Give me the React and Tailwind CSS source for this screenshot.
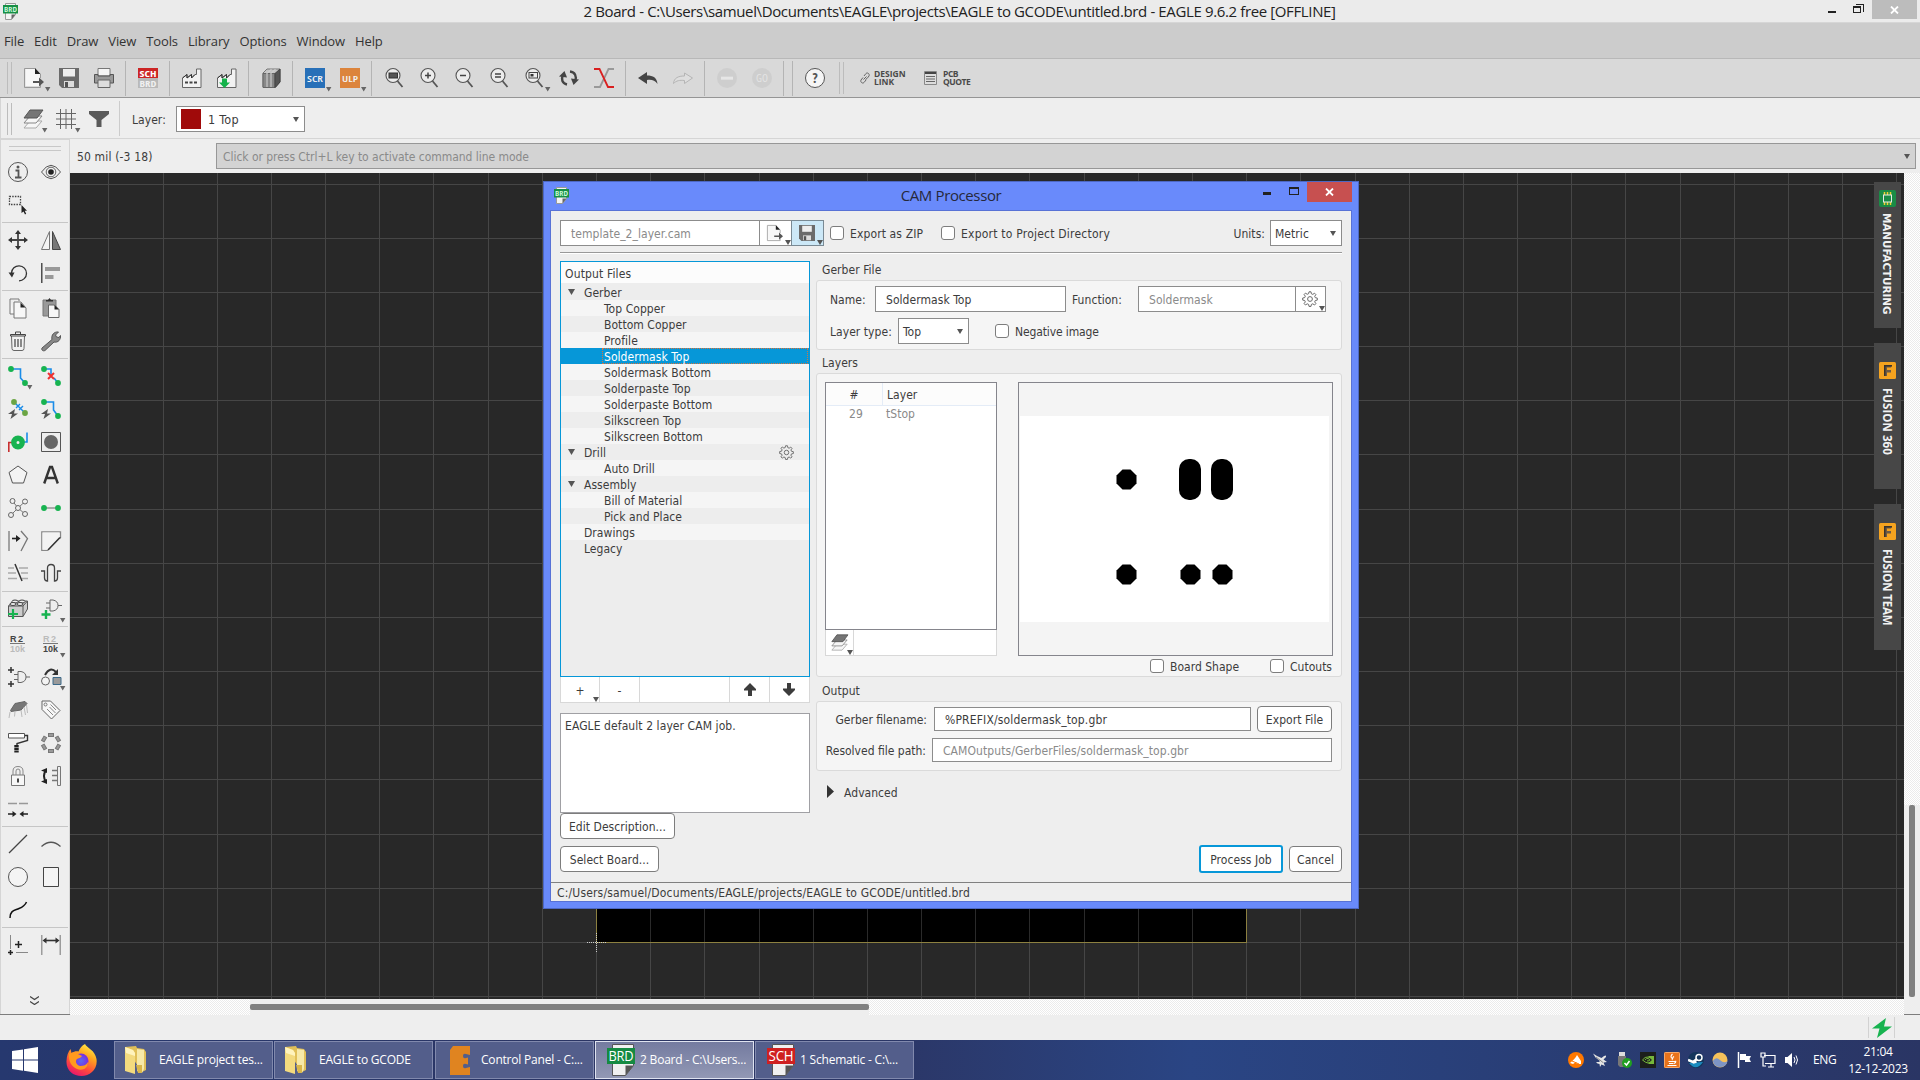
import React from "react";

const UI = "font-['DejaVu_Sans_Condensed','DejaVu_Sans',sans-serif] [font-stretch:condensed] text-[12px] leading-[16px] tracking-[0.05px] text-[#3c3c3c]";
const SEGOE = "font-['Open_Sans','Noto_Sans',sans-serif] [font-stretch:normal]";

function Icon({ size = 20, vb = 20, drop = false, dx = 12, dy = 11, className = "", children }) {
  return (
    <svg width={size} height={size} viewBox={`0 0 ${vb} ${vb}`} className={"shrink-0 overflow-visible " + className} fill="none" stroke="#444" strokeWidth="1">
      {children}
      {drop && <path d={`M${10 + dx - 3} ${10 + dy - 2}h5.4l-2.7 4.4z`} fill="#666" stroke="none" />}
    </svg>
  );
}

const Gear = ({ size = 15 }) => (
  <svg width={size} height={size} viewBox="0 0 16 16" fill="none" stroke="#6a6a6a" strokeWidth="1" className="shrink-0">
    <path d="M7 .8h2l.4 2 1.4.6 1.7-1.2 1.4 1.4-1.2 1.7.6 1.4 2 .4v2l-2 .4-.6 1.4 1.2 1.7-1.4 1.4-1.7-1.2-1.4.6-.4 2H7l-.4-2-1.4-.6-1.7 1.2-1.4-1.4 1.2-1.7-.6-1.4-2-.4V7l2-.4.6-1.4-1.2-1.7 1.4-1.4 1.7 1.2 1.4-.6z" />
    <circle cx="8" cy="8" r="2.4" />
  </svg>
);

const NewShape = () => (
  <>
    <path d="M1.5.5H11V6h5v12H1.5z" fill="#f7f7f7" stroke="none" />
    <path d="M11 .5H.5v19H16.500V17M16.500 6v4" stroke="#999" />
    <path d="M11 0l5.5 6H11z" fill="#222" stroke="none" />
    <path d="M9 13h6v-3.500l5 4.500-5 4.500V15H9z" fill="#555" stroke="none" />
  </>
);
const SaveShape = () => (
  <>
    <path d="M0 0h20v20H3l-3-3z" fill="#6b6b6b" stroke="none" />
    <path d="M4 1h12v7.500H4z" fill="#eee" stroke="none" />
    <path d="M5 13h10v6H5z" fill="#ddd" stroke="none" />
    <path d="M6 14h3v5H6z" fill="#555" stroke="none" />
  </>
);
const LayersShape = () => (
  <>
    <path d="M7 12h12l-6 7H1z" fill="#f6f6f6" stroke="#aaa" />
    <path d="M7 7h12l-6 7H1z" fill="#f6f6f6" stroke="#888" />
    <path d="M7 1h13l-6 8H1z" fill="#757575" stroke="#555" />
  </>
);
const Lens = ({ children }) => (
  <>
    <circle cx="9" cy="7.500" r="7" fill="#ececec" stroke="#555" strokeWidth="1.100" />
    <path d="M13.500 13l5 6" stroke="#555" strokeWidth="1.800" />
    {children}
  </>
);
const Factory = () => (
  <>
    <path d="M.5 19.500V10l4.500-3.500V10l4.500-3.500V10L13 6.500h1.500V1h4.500v18.500z" fill="#f2f2f2" stroke="#666" />
    <path d="M.5 10l4.500-3.500V10l4.500-3.500V10L13 6.500" stroke="#333" />
  </>
);
const Doc = ({ label, color }) => (
  <svg width="15" height="17" viewBox="0 0 15 17" className="shrink-0">
    <path d="M2.500.5h10v11l-4 5h-6z" fill="#f4f4f4" stroke="#999" />
    <path d="M12.500 11.500l-4 5v-5z" fill="#666" />
    <rect x="0" y="2" width="15" height="8.500" fill={color} />
    <text x="7.500" y="8.900" fontSize="7.500" fontWeight="600" fontFamily="Open Sans" fill="#d8ffe0" textAnchor="middle" textLength="13" lengthAdjust="spacingAndGlyphs">{label}</text>
  </svg>
);

/* ---------- top bars ---------- */
const Sep = () => <div className="mx-1 h-[35px] w-px shrink-0 bg-[#b4b4b4]" />;
const Btn = ({ children, ...p }) => (
  <div className="flex w-[35px] shrink-0 pl-2"><Icon {...p} dx={14}>{children}</Icon></div>
);
const Handle = () => (
  <div className="flex shrink-0 gap-[3px]"><div className="h-8 w-px bg-[#bcbcbc]" /><div className="h-8 w-px bg-[#bcbcbc]" /></div>
);
const TileIcon = ({ fill, label }) => (
  <>
    <rect width="20" height="20" fill={fill} stroke="none" />
    <text x="10" y="13.500" fontSize="9.500" fontFamily="Open Sans" fontWeight="600" fill="#f3f3f3" stroke="none" textAnchor="middle" textLength="16" lengthAdjust="spacingAndGlyphs">{label}</text>
  </>
);

function MainToolbar() {
  return (
    <div className="flex h-[39px] items-center border-b border-[#959595] bg-[#d9d9d9] pl-[7px]">
      <Handle />
      <div className="w-1 shrink-0" />
      <Btn drop><NewShape /></Btn>
      <Btn><SaveShape /></Btn>
      <Btn>
        <path d="M4 .5h12V8H4z" fill="#f5f5f5" stroke="#777" />
        <path d="M.5 6.500h3.500V8h12V6.500h3.500v8.500H.5z" fill="#999" stroke="#555" />
        <path d="M4 12h12v7.500H4z" fill="#ddd" stroke="#666" />
      </Btn>
      <Sep />
      <Btn>
        <rect width="20" height="10" fill="#cc2525" stroke="none" />
        <rect y="10" width="20" height="10" fill="#b9b9b9" stroke="none" />
        <text x="10" y="8.800" fontSize="9.500" fontWeight="bold" fontFamily="Open Sans" fill="#fff" stroke="none" textAnchor="middle" textLength="17" lengthAdjust="spacingAndGlyphs">SCH</text>
        <text x="10" y="18.800" fontSize="9.500" fontWeight="bold" fontFamily="Open Sans" fill="#f0f0f0" stroke="none" textAnchor="middle" textLength="17" lengthAdjust="spacingAndGlyphs">BRD</text>
      </Btn>
      <Sep />
      <Btn><Factory /><path d="M3 14.500h12" strokeDasharray="3 1.500" strokeWidth="2" /></Btn>
      <Btn><Factory /><path d="M5 10.500h5v4h3L7.500 20 2 14.500h3z" fill="#14b24a" stroke="none" /></Btn>
      <Sep />
      <Btn>
        <path d="M2 5l4-4h13v13l-4 5H2z" fill="#c5c5c5" stroke="#777" />
        <path d="M2 5.500h12V19.500H2z" fill="#888" stroke="#666" />
        <path d="M14 5.500L19 1v13l-5 5.500z" fill="#555" stroke="#444" />
        <path d="M6 5v14M10 5v14M6 5.500L10.500 1M10 5.500L14.500 1" stroke="#d5d5d5" />
      </Btn>
      <Sep />
      <Btn drop><TileIcon fill="#2870b8" label="SCR" /></Btn>
      <Btn drop><TileIcon fill="#dc843c" label="ULP" /></Btn>
      <Sep />
      <Btn><Lens><rect x="5" y="5" width="8.500" height="5" fill="#555" stroke="#333" /></Lens></Btn>
      <Btn><Lens><path d="M6 7.500h6M9 4.500v6" strokeWidth="1.500" /></Lens></Btn>
      <Btn><Lens><path d="M6 7.500h6" strokeWidth="1.500" /></Lens></Btn>
      <Btn><Lens><path d="M6 6h6M6 9h6" strokeWidth="1.400" /></Lens></Btn>
      <Btn drop><Lens><rect x="5" y="4.500" width="8.500" height="5.500" stroke="#444" /><rect x="6.500" y="6" width="3" height="2.500" fill="#333" stroke="none" /></Lens></Btn>
      <Btn>
        <path d="M8 16.500C3 15.500 2 11 4 7" strokeWidth="2.400" /><path d="M0 8.500L5.500 3 8 9.500z" fill="#444" stroke="none" />
        <path d="M11 3.500c5 .5 7 5 5 9" strokeWidth="2.400" /><path d="M20 11.500L14.500 17 12 10.500z" fill="#444" stroke="none" />
      </Btn>
      <Btn>
        <path d="M20 1h-5.500L6 19H0" stroke="#999" strokeWidth="1.800" />
        <path d="M0 1h5.500L14 19h6" stroke="#d92020" strokeWidth="1.800" />
      </Btn>
      <Sep />
      <Btn><path d="M0 10l9-6v3.500c6 0 10 2 10.500 8.500-2.500-4-6-4.500-10.500-4v4z" fill="#444" stroke="none" /></Btn>
      <Btn><path d="M19.500 10l-8-5v3C5 8 1 10 .5 15.500c3-3 6-3.500 11-3v3z" fill="#dedede" stroke="#b5b5b5" /></Btn>
      <Sep />
      <Btn><circle cx="10" cy="10" r="10" fill="#cecece" stroke="none" /><rect x="4" y="8.700" width="12" height="3" fill="#e6e6e6" stroke="none" /></Btn>
      <Btn><circle cx="10" cy="10" r="10" fill="#cecece" stroke="none" /><text x="10" y="13.500" fontSize="10" fontFamily="Open Sans" fill="#e4e4e4" stroke="none" textAnchor="middle" textLength="12" lengthAdjust="spacingAndGlyphs">GO</text></Btn>
      <Sep />
      <Sep />
      <Btn><circle cx="10" cy="10" r="9.500" fill="#f5f5f5" stroke="#555" /><text x="10" y="15" fontSize="14" fontWeight="bold" fontFamily="Open Sans" fill="#555" stroke="none" textAnchor="middle">?</text></Btn>
      <div className="w-[7px] shrink-0" />
      <Handle />
      <div className="ml-[15px] flex items-center gap-[3px]">
        <svg width="12" height="12" viewBox="0 0 12 12" fill="none" stroke="#666"><path d="M4.500 7.500l3-3M5 4l2-2.500c1.500-1.500 4 .5 3 2.500L8 6.500 6.500 7.500M7 8L5 10.500c-1.500 1.500-4-.5-3-2.500L4 5.500" /></svg>
        <div className={`${SEGOE} w-[46px] text-[8.500px] font-bold leading-[8px] tracking-[0] text-[#4a4a4a]`}>DESIGN<br />LINK</div>
      </div>
      <div className="ml-[4px] flex items-center gap-[6px]">
        <svg width="13" height="14" viewBox="0 0 13 14"><path d="M.5.5h12v13H.5z" fill="#ddd" stroke="#888" /><path d="M1 1h11v2H1z" fill="#444" /><path d="M2 5.500h9M2 8h9M2 10.500h9" stroke="#666" /></svg>
        <div className={`${SEGOE} text-[8.500px] font-bold leading-[8px] tracking-[-0.450px] text-[#4a4a4a]`}>PCB<br />QUOTE</div>
      </div>
    </div>
  );
}

const Caret = () => <svg width="6" height="5" viewBox="0 0 6 5" className="shrink-0"><path d="M0 0h6L3 5z" fill="#555" /></svg>;

function LayerBar() {
  return (
    <div className="flex h-[41px] items-center border-b border-l border-[#d5d5d5] bg-[#eee] pl-[6px] pt-px">
      <Handle />
      <div className="ml-[4px] flex w-[100px] items-center">
        <div className="flex w-[33px] pl-[7px]"><Icon drop><LayersShape /></Icon></div>
        <div className="flex w-[33px] pl-[7px]"><Icon drop><path d="M4.500 0v20M10 0v20M15.500 0v20M0 4.500h20M0 10h20M0 15.500h20" stroke="#666" /></Icon></div>
        <div className="flex w-[33px] pl-[7px]"><Icon><path d="M0 2h20v3l-7.500 6v7h-5v-7L0 5z" fill="#5a5a5a" stroke="none" /></Icon></div>
      </div>
      <div className="ml-[3px] h-[35px] w-px bg-[#ccc]" />
      <span className="ml-[12px] w-[44px] pt-[2px]">Layer:</span>
      <div className="mt-px flex h-[26px] w-[129px] items-center border border-[#8c8c8c] bg-white pl-1 pr-[5px]">
        <div className="h-5 w-5 bg-[#a00a0a]" />
        <span className="ml-[7px] flex-1 pt-px text-[12.500px] tracking-[0.300px]">1 Top</span>
        <Caret />
      </div>
    </div>
  );
}

/* ---------- left tool palette ---------- */
const GREEN = "#17b350";
const BLUE = "#1a8ce8";
const Dot = ({ x, y, c = GREEN }) => <circle cx={x} cy={y} r="2.900" fill={c} stroke="none" />;
const Bolt = () => <path d="M7 10l-7 5h4l-1.500 5 7.500-5.500H6z" fill="#555" stroke="none" />;
const Gate = ({ x = 0, y = 0 }) => (
  <g transform={`translate(${x} ${y})`}><path d="M4 0h3q5 1 5 5.500Q12 10 7 11H4zM0 3h4M0 8h4M12 5.500h4" stroke="#666" /></g>
);
const R2 = ({ a, b }) => (
  <>
    <text x="2" y="7.500" fontSize="9" fontWeight="bold" fontFamily="Liberation Sans" fill={a} stroke="none" textLength="13">R2</text>
    <path d="M2 9.500h15" stroke="#777" />
    <text x="2" y="18" fontSize="9" fontWeight="bold" fontFamily="Liberation Sans" fill={b} stroke="none" textLength="15">10k</text>
  </>
);

const TOOL_GROUPS = [
  [
    [<><circle cx="10" cy="10" r="9.500" stroke="#555" /><path d="M7.500 8.500h3V15M7 15.500h6.500" stroke="#555" strokeWidth="1.800" /><circle cx="10" cy="5" r="1.500" fill="#555" stroke="none" /></>],
    [<><path d="M.5 10Q10-3.500 19.500 10 10 23.500.5 10z" stroke="#555" /><circle cx="10" cy="10" r="4.800" stroke="#666" /><circle cx="10" cy="10" r="2.800" fill="#222" stroke="none" /></>],
    [<><path d="M1.500 1.500h11v8h-11z" strokeDasharray="1.500 1.200" strokeWidth="1.300" /><path d="M13.500 10v8l2-1.500 1.500 3 1.200-.8-1.500-3h2.300z" fill="#222" stroke="none" /></>],
    null,
  ],
  [
    [<><path d="M10 2v16M2 10h16" strokeWidth="1.800" /><path d="M10 0l3 4H7zM10 20l3-4H7zM0 10l4-3v6zM20 10l-4-3v6z" fill="#333" stroke="none" /></>],
    [<><path d="M8.500 1.500v18h-8z" stroke="#777" fill="#f5f5f5" /><path d="M11.500 1.500v18h8z" fill="#777" stroke="#444" /></>],
    [<><path d="M3.500 10A7.500 7.500 0 1 1 11 17.800" stroke="#333" strokeWidth="1.300" /><path d="M.5 9.500h6L4 14.500z" fill="#333" stroke="none" /></>],
    [<><path d="M.8 0v20" stroke="#333" strokeWidth="1.300" /><path d="M4 4h15v4H4zM4 12h8.500v4H4z" fill="#999" stroke="none" /></>],
  ],
  [
    [<><path d="M2 1h9v2M2 1v15h4M6 4h7l5 6v10H6z" fill="#f7f7f7" stroke="#777" /><path d="M12.500 4.500l5 5h-5z" fill="#222" stroke="none" /></>],
    [<><path d="M2 2h13v16H2z" fill="#999" stroke="#777" /><path d="M5 3.500V2h2L8.500 0 10 2h2v1.500z" fill="#333" stroke="none" /><path d="M7.500 7h6l4.500 4.500v8H7.500z" fill="#f7f7f7" stroke="#666" /><path d="M13.500 7l4.500 4.500h-4.500z" fill="#222" stroke="none" /></>],
    [<><path d="M3.500 5l.5 12.500q0 2 2 2h8q2 0 2-2L16.500 5" stroke="#666" fill="#f2f2f2" /><path d="M2.500 3.500h15v1.500h-15zM7.500 3V1h5v2" stroke="#444" /><path d="M7 8v8M10 8v8M13 8v8" stroke="#777" strokeWidth="1.700" /></>],
    [<path d="M1 17L11 8.500C10 4 13 .5 17.500 1L14.500 4l1 2 2.500.5 1.500-2c.5 4-2.500 7.500-6.500 6.500L4 19.500c-2 1-4-.5-3-2.500z" fill="#888" stroke="#555" />],
  ],
  [
    [<><path d="M3 3h9.500v9L17 17" stroke={BLUE} strokeWidth="1.600" /><Dot x="3" y="3" /><Dot x="17" y="17" /></>, 1],
    [<><path d="M3 3h7v6M13 12l4 5" stroke={BLUE} strokeWidth="1.600" /><Dot x="3" y="3" /><Dot x="17" y="17" /><path d="M7 7l6 6M13 7l-6 6" stroke="#ee3030" strokeWidth="2" /></>],
    [<><path d="M6 3l11 11M8 9l4-4M11 11l4-4" stroke={BLUE} strokeWidth="1.400" /><Dot x="6" y="3" c="#6ba544" /><Dot x="17" y="14" c="#6ba544" /><Bolt /></>],
    [<><path d="M3 3h9.500v8l4.500 6" stroke={BLUE} strokeWidth="1.600" /><Dot x="3" y="3" /><Dot x="17" y="17" /><Bolt /></>],
    [<><path d="M.8 20v-9.500H5" stroke="#c83030" strokeWidth="1.600" /><path d="M19 .5V10h-4" stroke={BLUE} strokeWidth="1.600" /><circle cx="10" cy="10.500" r="4.200" stroke={GREEN} strokeWidth="5.400" /></>],
    [<><path d="M.5.5h19v19H.5z" stroke="#555" /><circle cx="10" cy="10" r="7" fill="#666" stroke="none" /></>],
    [<path d="M10 1l9 6.500-3.500 10.500h-11L1 7.500z" fill="#f4f4f4" stroke="#555" />],
    [<path d="M3.200 18.500L9 2h2l5.800 16.500M5.500 13h9" stroke="#333" strokeWidth="2.400" />],
    [<><path d="M4.500 3L10 10 17 3.500M3 17l7-7 7 6" stroke="#777" /><g fill="#eee" stroke="#666"><circle cx="4.500" cy="3" r="2.500" /><circle cx="17" cy="3.500" r="2.500" /><circle cx="3" cy="17" r="2.500" /><circle cx="17" cy="16" r="2.500" /><circle cx="10" cy="10" r="2.500" /></g></>],
    [<><path d="M3 10h14" stroke="#999" strokeWidth="1.600" /><Dot x="3" y="10" /><Dot x="17" y="10" /></>],
    [<><path d="M1 0v20" stroke="#888" strokeWidth="1.500" /><path d="M13 0l6.500 7.500L13 20" stroke="#777" strokeWidth="1.300" /><path d="M4 7.500h5" stroke="#222" strokeWidth="1.600" /><path d="M8 4l4.500 3.500L8 11z" fill="#222" stroke="none" /></>],
    [<><path d="M19.500 7V.8H.8v18.500H7" stroke="#888" strokeWidth="1.300" /><path d="M1.500 1.500h17V7L7 18.700H1.500z" fill="#f3f3f3" stroke="none" /><path d="M19.500 7h-1L7 19" stroke="#333" strokeWidth="1.600" /></>],
    [<><path d="M0 4h6M11 4h9M0 9h8M13 9h7M0 14.500h9M14 14.500h6" stroke="#aaa" strokeWidth="1.400" /><path d="M7 0l7 17" stroke="#333" strokeWidth="1.500" /></>],
    [<path d="M0 7h3.500v7q0 3 3 3V4q0-3.500 3.500-3.500T13.500 4v13q3 0 3-3V7H20" stroke="#444" strokeWidth="1.300" />],
  ],
  [
    [<><path d="M.5 7L5 2h14.500v8L15 17.500H.5z" fill="#ccc" stroke="#555" /><path d="M.5 7H15v10.500M15 7l4.500-5" stroke="#555" /><g fill="#eee" stroke="#444"><ellipse cx="7" cy="2.500" rx="3" ry="1.500" /><ellipse cx="14" cy="2.500" rx="3" ry="1.500" /><ellipse cx="5" cy="5" rx="3" ry="1.500" /><ellipse cx="12" cy="5" rx="3" ry="1.500" /></g><path d="M5 10v10M0 15h10" stroke={GREEN} strokeWidth="2.200" /></>],
    [<><Gate x={5} y={1} /><path d="M5 11v9M.5 15.500h9" stroke={GREEN} strokeWidth="2.400" /></>, 1],
  ],
  [
    [<R2 a="#444" b="#bbb" />],
    [<R2 a="#bbb" b="#444" />, 1],
    [<><Gate x={6} y={4.500} /><path d="M3 0v6M0 3h6M3 14v6M0 17h6" stroke="#333" strokeWidth="1.500" /></>],
    [<><path d="M4 8Q9-1 15 5" stroke="#333" strokeWidth="2" /><path d="M17 2v6h-6z" fill="#333" stroke="none" /><circle cx="4.500" cy="14" r="4" stroke="#666" fill="#f3f3f3" /><path d="M12 10.500h8v7h-8z" fill="#999" stroke="#3d6a8a" /></>, 1],
    [<><path d="M7 3.500L17 1.500l2 2-6 6.500-10 1.500-.5-1z" fill="#777" stroke="#666" /><path d="M2 12l-1 6M7 11.500l-.5 5M13 10l1 7M16 7l1.500 8M18.500 5l1 8" stroke="#bbb" /></>],
    [<><path d="M1 1h8.500l9.500 9.500L10.500 19 1 9.500z" fill="#f7f7f7" stroke="#666" /><circle cx="4.500" cy="4.500" r="1.500" stroke="#777" /><path d="M6 9l6 6M8.500 7l6 6M9.500 4.500l5.500 5.500" stroke="#888" /></>],
    [<><path d="M.5.500h16v4.500H.5z" fill="#fff" stroke="#555" /><path d="M17 2.500h2.500v5L9 10.500V13" stroke="#333" strokeWidth="1.400" /><path d="M8.500 12v8" stroke="#222" strokeWidth="4.400" strokeDasharray="2.200 .5" /></>],
    [<g fill="#999" stroke="#777">{[0, 60, 120, 180, 240, 300].map((a) => <rect key={a} x="7.500" y="0.500" width="5" height="3" transform={`rotate(${a} 10 10)`} />)}</g>],
    [<><path d="M3.500 9h13v10.500h-13z" fill="#f7f7f7" stroke="#777" /><path d="M5 9V5Q5 .5 10 .5T15 5v4M8 9V5q0-2 2-2t2 2v4" stroke="#888" /><path d="M10 12.500v4" stroke="#444" strokeWidth="2" /></>],
    [<><path d="M5 4Q1 10 5 16" stroke="#222" strokeWidth="2" /><path d="M0 4.500L6 2v5zM0 15.500L6 18v-5z" fill="#222" stroke="none" /><path d="M11 4.500h5M11 9.500h5M11 14.500h5" stroke="#777" strokeWidth="1.500" /><path d="M16.500.5h3v19h-3z" stroke="#777" /></>],
    [<><path d="M0 4.500h9M11 4.500h9" stroke="#999" strokeWidth="1.600" /><path d="M0 15h6M14 15h6" stroke="#222" strokeWidth="1.600" /><path d="M4.500 12l4 3-4 3zM15.500 12l-4 3 4 3z" fill="#222" stroke="none" /></>],
    null,
  ],
  [
    [<path d="M1 19L19 1" stroke="#444" strokeWidth="1.200" />],
    [<path d="M.5 12.500Q10 4 19.500 12.500" stroke="#555" strokeWidth="1.300" />],
    [<circle cx="10" cy="10" r="9.500" fill="#f4f4f4" stroke="#555" />],
    [<path d="M2.500.5h15v19h-15z" fill="#f4f4f4" stroke="#444" />],
    [<path d="M2 18c0-8 5-7.500 9-9.500 4-1.500 6-3 7.500-6.500" stroke="#111" strokeWidth="1.500" />],
    null,
  ],
  [
    [<><path d="M2.500 0v14M8 17.500h12" stroke="#888" /><path d="M10.500 6v7M7 9.500h7M2.500 15v5M0 17.500h5" stroke="#222" strokeWidth="1.500" /></>],
    [<><path d="M.8 0v20M19.200 0v20" stroke="#888" strokeWidth="1.200" /><path d="M3 5.500h14" stroke="#333" strokeWidth="1.600" /><path d="M1.500 5.500l4-3v6zM18.500 5.500l-4-3v6z" fill="#333" stroke="none" /></>],
  ],
];

function Palette() {
  return (
    <div className="flex w-[70px] shrink-0 flex-col items-start border-x border-t border-[#d5d5d5] bg-[#eee] pt-[6px]">
      <div className="ml-2 flex h-[5px] w-[52px] flex-col justify-between"><div className="h-px bg-[#c8c8c8]" /><div className="h-px bg-[#c8c8c8]" /></div>
      <div className="h-[5px] shrink-0" />
      {TOOL_GROUPS.map((g, i) => (
        <div key={i} className="w-full">
          {i > 0 && <div className="mx-[1px] mb-px h-px bg-[#c6c6c6]" />}
          <div className="grid w-[66px] grid-cols-2">
            {g.map((t, j) => (
              <div key={j} className="flex h-[33px] pl-[7px] pt-[6px]">
                {t && <Icon drop={!!t[1]}>{t[0]}</Icon>}
              </div>
            ))}
          </div>
        </div>
      ))}
      <div className="flex-1" />
      <svg width="9" height="9" viewBox="0 0 9 9" fill="none" stroke="#444" strokeWidth="1.200" className="mb-[9px] ml-[29px]"><path d="M0 .5l4.500 3 4.500-3M0 5.500l4.500 3 4.500-3" /></svg>
    </div>
  );
}

/* ---------- board canvas ---------- */
const DITHER = "bg-[repeating-conic-gradient(#ebebeb_0_25%,#ffffff_0_50%)] bg-[length:2px_2px]";
const COLS = Array.from({ length: 34 }, (_, i) => Math.floor(38.9 + 54.18 * i));
const ROWS = Array.from({ length: 16 }, (_, i) => Math.floor(11.1 + 54.16 * i));

function BoardCanvas() {
  return (
    <svg width="1834" height="826" viewBox="0 0 1834 826" className="block" shapeRendering="crispEdges">
      <rect width="1834" height="826" fill="#282828" />
      {COLS.map((x) => <rect key={x} x={x} y="0" width="1" height="826" fill="#464646" />)}
      {ROWS.map((y) => <rect key={y} x="0" y={y} width="1834" height="1" fill="#464646" />)}
      <rect x="526" y="500" width="650" height="269" fill="#000" />
      {COLS.filter((x) => x > 526 && x < 1176).map((x) => <rect key={x} x={x} y="500" width="1" height="269" fill="#2a2a2a" />)}
      <path d="M526.5 500v269.500h650V500" fill="none" stroke="#8c8040" />
      <path d="M517 769.500h19M526.500 760v19" stroke="#ccc" strokeDasharray="1 1" />
    </svg>
  );
}

function SideTab({ icon, label, cls, pt }) {
  return (
    <div className={`flex h-[146px] w-[27px] flex-col items-center bg-[#474747] ${pt}`}>
      {icon}
      <span className={`whitespace-nowrap [writing-mode:vertical-rl] text-[#f2f2f2] ${cls}`}>{label}</span>
    </div>
  );
}
const FusionIcon = () => (
  <svg width="17" height="17" viewBox="0 0 17 17" className="shrink-0"><rect width="17" height="17" rx="1.500" fill="#f5a31f" /><path d="M5 3h8l-1 2.500H8V8h4v2.500H8V14H5z" fill="#6e5a44" /><path d="M5 3h8v1.500H6.500V14H5z" fill="#3a332c" /></svg>
);

/* ---------- CAM dialog ---------- */
const Check = ({ label, className = "" }) => (
  <div className={"flex items-center gap-[6px] " + className}>
    <div className="h-[14px] w-[14px] rounded-[3px] border border-[#7d7d7d] bg-white" />
    <span className="whitespace-nowrap pt-[2px]">{label}</span>
  </div>
);
const Field = ({ w, h = "h-[26px]", dim, children, className = "" }) => (
  <div className={`flex shrink-0 items-center whitespace-nowrap border border-[#8c8c8c] bg-white pl-[10px] pt-[2px] ${w} ${h} ${dim ? "text-[#8a8a8a]" : ""} ${className}`}>{children}</div>
);
const Select = ({ w, children }) => (
  <div className={`flex h-[26px] shrink-0 items-center justify-between border border-[#8c8c8c] bg-white pl-[4px] pr-[5px] ${w}`}><span className="pt-[2px]">{children}</span><Caret /></div>
);
const Push = ({ w, primary, children }) => (
  <div className={`flex shrink-0 items-center justify-center whitespace-nowrap bg-white pt-[2px] ${w} ${primary ? "h-7 rounded-[3px] border-2 border-[#0697d8]" : "h-[26px] rounded-[4px] border border-[#7d7d7d]"}`}>{children}</div>
);
const CornerCaret = () => <svg width="6" height="5" viewBox="0 0 6 5" className="absolute bottom-0 right-0"><path d="M0 0h6L3 5z" fill="#555" /></svg>;

const TREE = [
  ["Gerber", 0, 1], ["Top Copper", 1], ["Bottom Copper", 1], ["Profile", 1], ["Soldermask Top", 1], ["Soldermask Bottom", 1],
  ["Solderpaste Top", 1], ["Solderpaste Bottom", 1], ["Silkscreen Top", 1], ["Silkscreen Bottom", 1],
  ["Drill", 0, 1], ["Auto Drill", 1], ["Assembly", 0, 1], ["Bill of Material", 1], ["Pick and Place", 1], ["Drawings", 0], ["Legacy", 0],
];

function TreeRow({ row, i }) {
  const [label, level, open] = row;
  const selected = label === "Soldermask Top";
  const bg = selected ? "bg-[#0697d8] text-white" : i % 2 ? "bg-[#f5f5f5]" : "bg-[#ededed]";
  const pad = selected ? "mr-px border border-dotted border-[#d8743c] pl-[1px]" : level ? "pl-[2px]" : "pl-[1px]";
  return (
    <div className={`flex items-center ${i ? "h-4" : "h-[17px]"} ${bg}`}>
      <div className="flex w-[22px] shrink-0 justify-center pr-[1px]">{open && <svg width="7" height="6" viewBox="0 0 7 6"><path d="M0 0h7L3.500 6z" fill="#555" /></svg>}</div>
      {level === 1 && <div className="w-[19px] shrink-0" />}
      <div className={`flex h-full flex-1 items-center ${pad}`}><span className="pt-[2px]">{label}</span></div>
      {label === "Drill" && <div className="mr-[15px]"><Gear size={15} /></div>}
    </div>
  );
}

const Group = ({ h, className = "", children }) => (
  <div className={`rounded-[3px] border border-[#dadada] bg-[#f5f5f5] ${h} ${className}`}>{children}</div>
);

function Preview() {
  const oct = (x, y) => <path key={`${x}-${y}`} transform={`translate(${x} ${y})`} d="M-4-10H4L10-4V4L4 10H-4L-10 4V-4z" />;
  return (
    <div className="h-[274px] w-[315px] border border-[#85858c] bg-[#f4f4f4] pl-[1px] pt-[33px]">
      <svg width="309" height="206" viewBox="0 0 309 206" className="block">
        <rect width="309" height="206" fill="#fff" />
        {oct(106.500, 63.5)}
        <rect x="159" y="43" width="22" height="41" rx="10" />
        <rect x="191" y="43" width="22" height="41" rx="10" />
        {oct(106.500, 158.500)}{oct(170.500, 158.500)}{oct(202.500, 158.500)}
      </svg>
    </div>
  );
}

function CamDialog() {
  return (
    <div className="absolute left-[543px] top-[181px] flex h-[728px] w-[816px] flex-col border border-[#4d68c4] bg-[#698afb] px-[6px] pb-[6px]">
      <div className="flex h-[28px] shrink-0 items-start">
        <div className="ml-[4px] mt-[5px] w-[201px]"><Doc label="BRD" color="#178f45" /></div>
        <div className={`${SEGOE} mt-[2px] w-[392px] text-center text-[15px] leading-[22px] tracking-[-0.380px] text-[#26283a]`}>CAM Processor</div>
        <div className="flex flex-1 justify-end">
          <svg width="46" height="20" viewBox="0 0 46 20" shapeRendering="crispEdges"><path d="M2 10h8v3H2z" fill="#222" /><path d="M28.500 5.500h9v7h-9zM28.500 6.500h9" fill="none" stroke="#222" strokeWidth="1" /></svg>
          <div className="flex h-5 w-[45px] items-center justify-center bg-[#c75050]"><svg width="9" height="8" viewBox="0 0 9 8"><path d="M1 .5l7 7M8 .5l-7 7" stroke="#fff" strokeWidth="1.800" /></svg></div>
        </div>
      </div>
      <div className="flex flex-1 flex-col border border-[#5872d6] bg-[#eee]">
        <div className="flex h-[42px] shrink-0 items-center border-b border-[#999] pb-[6px] pt-[9px] ml-[9px] mr-[9px] shadow-[0_1px_0_#fff]">
          <Field w="w-[200px]" dim>template_2_layer.cam</Field>
          <div className="relative -ml-px flex h-[26px] w-[33px] items-center justify-center border border-[#8c8c8c] bg-white pb-px pr-[2px]"><Icon size={16}><NewShape /></Icon><CornerCaret /></div>
          <div className="relative -ml-px flex h-[26px] w-[33px] items-center justify-center border border-[#7a8a94] bg-[#cce8f7] pb-px pr-[2px]"><Icon size={16}><SaveShape /></Icon><CornerCaret /></div>
          <Check label="Export as ZIP" className="ml-[6px] w-[111px] tracking-[0.120px]" />
          <Check label="Export to Project Directory" className="tracking-[0.220px]" />
          <div className="flex-1" />
          <span className="mr-[5px] pt-[2px]">Units:</span>
          <Select w="w-[72px]">Metric</Select>
        </div>
        <div className="flex flex-1 px-[9px]">
          <div className="flex w-[250px] shrink-0 flex-col pt-2">
            <div className="h-[416px] shrink-0 border border-[#0697d8] bg-[#ededed]">
              <div className="flex h-[21px] items-center bg-[#fcfcfc] pl-1 pt-[3px] tracking-[0.150px]">Output Files</div>
              {TREE.map((r, i) => <TreeRow key={r[0]} row={r} i={i} />)}
            </div>
            <div className="flex h-[26px] shrink-0 border border-t-0 border-[#d8d8d8] bg-white [&>div]:relative [&>div]:flex [&>div]:items-center [&>div]:justify-center">
              <div className="w-[39px] border-r border-[#d8d8d8] pt-[2px]">+<CornerCaret /></div>
              <div className="w-10 border-r border-[#d8d8d8] pt-[2px]">-</div>
              <div className="w-[90px] border-r border-[#d8d8d8]" />
              <div className="w-10 border-r border-[#d8d8d8]"><svg width="12" height="13" viewBox="0 0 12 13"><path d="M6 0l6 6v1.500H8V13H4V7.500H0V6z" fill="#3c3c3c" /></svg></div>
              <div className="flex-1 pr-px"><svg width="12" height="13" viewBox="0 0 12 13"><path d="M6 13l6-6V5.500H8V0H4v5.500H0V7z" fill="#3c3c3c" /></svg></div>
            </div>
            <div className="mt-[10px] h-[100px] shrink-0 border border-[#a0a0a4] bg-white pl-1 pt-[4px] tracking-[0.080px]">EAGLE default 2 layer CAM job.</div>
            <Push w="w-[115px]">Edit Description...</Push>
            <div className="mt-[7px]"><Push w="w-[99px]">Select Board...</Push></div>
          </div>
          <div className="ml-[6px] flex w-[526px] flex-col">
            <div className="h-[27px] pl-[6px] pt-[9px]">Gerber File</div>
            <Group h="h-[70px]" className="pl-[13px] pt-[5px]">
              <div className="flex items-center">
                <span className="w-[45px] pt-[2px]">Name:</span>
                <Field w="w-[191px]">Soldermask Top</Field>
                <span className="ml-[6px] w-[66px] pt-[2px]">Function:</span>
                <Field w="w-[158px]" dim>Soldermask</Field>
                <div className="relative -ml-px flex h-[26px] w-[31px] items-center justify-center border border-[#8c8c8c] bg-white pr-[2px]"><Gear size={16} /><CornerCaret /></div>
              </div>
              <div className="mt-[6px] flex items-center">
                <span className="w-[68px] pt-[2px]">Layer type:</span>
                <Select w="w-[71px]">Top</Select>
                <Check label="Negative image" className="ml-[26px] tracking-[-0.120px]" />
              </div>
            </Group>
            <div className="h-[23px] pl-[6px] pt-[5px]">Layers</div>
            <Group h="h-[304px]" className="pl-[8px] pr-[8px] pt-[8px]">
              <div className="flex justify-between">
                <div className="w-[172px]">
                  <div className="h-[248px] border border-[#85858c] bg-white">
                    <div className="flex h-[23px] items-center border-b border-[#e4ecf7] bg-[#fcfcfc]">
                      <span className="flex h-full w-[57px] items-center justify-center border-r border-[#e4ecf7] pt-[2px]">#</span>
                      <span className="pl-1 pt-[2px]">Layer</span>
                    </div>
                    <div className="flex h-4 items-center text-[#8a8a8a]"><span className="w-[60px] pl-[23px]">29</span><span>tStop</span></div>
                  </div>
                  <div className="flex h-[26px] border border-t-0 border-[#d8d8d8] bg-white">
                    <div className="relative flex w-7 items-center justify-center border-r border-[#d8d8d8] pr-px"><Icon size={17}><LayersShape /></Icon><CornerCaret /></div>
                  </div>
                </div>
                <Preview />
              </div>
              <div className="mr-px mt-px flex justify-end tracking-[0]"><Check label="Board Shape" className="w-[120px]" /><Check label="Cutouts" /></div>
            </Group>
            <div className="h-[24px] pl-[6px] pt-[6px]">Output</div>
            <Group h="h-[70px]" className="pr-[9px] pt-[4px]">
              <div className="flex items-center justify-end">
                <span className="mr-[7px] pt-[2px] tracking-[0]">Gerber filename:</span>
                <Field w="w-[317px]" h="h-[24px]" className="tracking-[0.150px]">%PREFIX/soldermask_top.gbr</Field>
                <div className="ml-[6px]"><Push w="w-[75px]">Export File</Push></div>
              </div>
              <div className="mt-[6px] flex items-center justify-end">
                <span className="mr-[6px] pt-[2px] tracking-[0]">Resolved file path:</span>
                <Field w="w-[400px]" h="h-[24px]" className="tracking-[0.080px]" dim>CAMOutputs/GerberFiles/soldermask_top.gbr</Field>
              </div>
            </Group>
            <div className="mt-[13px] flex items-center gap-[10px] pl-[11px]">
              <svg width="7" height="13" viewBox="0 0 7 13" className="mb-[2px]"><path d="M0 0l7 6.500L0 13z" fill="#333" /></svg>
              <span className="-mb-px pt-px">Advanced</span>
            </div>
            <div className="mt-[45px] flex items-center justify-end gap-[6px]"><Push w="w-[84px]" primary>Process Job</Push><Push w="w-[53px]">Cancel</Push></div>
          </div>
        </div>
        <div className="flex h-[19px] shrink-0 items-center border-t border-[#808080] pl-[6px] pt-px tracking-[0.170px]">C:/Users/samuel/Documents/EAGLE/projects/EAGLE to GCODE/untitled.brd</div>
      </div>
    </div>
  );
}

/* ---------- taskbar ---------- */
const Folder = () => (
  <svg width="24" height="30" viewBox="0 0 24 30" className="shrink-0">
    <path d="M1 2l11-1 1 2 7 1 2 3v18l-4 2z" fill="#e0bf58" />
    <path d="M13 4l7 1v19l-2 4-5-2z" fill="#f7e9a8" />
    <path d="M1 2l8 3 2 3v21L1 26z" fill="#f3da7e" />
    <path d="M1 2l8 3 2 3v3L2 8z" fill="#fff3bd" />
    <path d="M12 20h6v8h-4z" fill="#d9b64a" />
  </svg>
);
const BigDoc = ({ label, color }) => (
  <svg width="29" height="32" viewBox="0 0 29 32" className="shrink-0">
    <path d="M5.500.5h21v21l-8 10h-13z" fill="#f0f0f0" stroke="#555" />
    <path d="M26.500 21.500l-8 10v-10z" fill="#555" />
    <rect x="0" y="4" width="28" height="16" fill={color} />
    <text x="14" y="17" fontSize="14" fontFamily="Open Sans" fill="#fff" textAnchor="middle" textLength="25" lengthAdjust="spacingAndGlyphs">{label}</text>
  </svg>
);
const Task = ({ icon, label, active, pl, gap, ml = "" }) => (
  <div className={`flex h-[38px] w-[159px] shrink-0 items-center border ${ml} ${pl} ${gap} ${active ? "border-[#dfe3f0] bg-gradient-to-b from-[#747ba0] to-[#9298b4]" : "border-[#8189ad] bg-[#535e8b]"}`}>
    {icon}<span className="whitespace-nowrap">{label}</span>
  </div>
);
const Tray = ({ children }) => <div className="flex w-6 shrink-0 justify-center"><svg width="16" height="16" viewBox="0 0 16 16" fill="none">{children}</svg></div>;

function Taskbar() {
  return (
    <div className={`${SEGOE} flex h-10 items-center bg-[#2a3868] bg-[linear-gradient(90deg,#26386f_0%,#2b3564_30%,#2b3564_45%,#2a4584_62%,#29407a_75%,#2a3564_100%)] text-[12px] tracking-[-0.200px] text-white`}>
      <svg width="27" height="26" viewBox="0 0 27 26" className="ml-3 shrink-0"><path d="M0 4l11-1.600V12.500H0zM12 2.200L26 0v12.500H12zM0 13.500h11v10.200L0 22zM12 13.500h14V26l-14-2.200z" fill="#fff" /></svg>
      <svg width="31" height="32" viewBox="0 0 31 32" className="ml-[27px] shrink-0">
        <defs>
          <linearGradient id="ff" x1="0.800" y1="0" x2="0.300" y2="1"><stop offset="0" stopColor="#fff24a" /><stop offset=".35" stopColor="#ffa51e" /><stop offset=".7" stopColor="#ff4a3c" /><stop offset="1" stopColor="#e8166d" /></linearGradient>
          <radialGradient id="fg"><stop offset="0" stopColor="#5a6bf0" /><stop offset="1" stopColor="#7a2be0" /></radialGradient>
        </defs>
        <path d="M19 0c2 4 10 6 11.500 15C32 25 24 32 15.500 32S0 26 .5 17C.7 12 2 8 4.500 5l1 4c3-2 5-2 7-1.500C14 4 16 1.500 19 0z" fill="url(#ff)" />
        <circle cx="15" cy="17" r="7.500" fill="url(#fg)" />
        <path d="M3 10c3-2 7-2 9 0l4 2c-1 2-4 2-5 3-2 2-1 6 3 7 4 0 6-1 8-4 0 7-6 9-11 7S2 17 3 10z" fill="#ff9a1e" />
      </svg>
      <Task ml="ml-[17px]" pl="pl-[9px]" gap="gap-[11px]" icon={<Folder />} label="EAGLE project tes..." />
      <Task ml="ml-px" pl="pl-[9px]" gap="gap-[11px]" icon={<Folder />} label="EAGLE to GCODE" />
      <Task ml="ml-[2px]" pl="pl-[14px]" gap="gap-[11px]" icon={<svg width="20" height="29" viewBox="0 0 20 29"><path d="M3 0h17v9l-4-1q-3-1-3 2t3 2l2-.5v7l-2-.5q-3-1-3 2t3 2l4-1v8H0V4z" fill="#e08420" /></svg>} label="Control Panel - C:..." />
      <Task ml="ml-px" pl="pl-[11px]" gap="gap-[4px]" active icon={<BigDoc label="BRD" color="#158a42" />} label="2 Board - C:\Users..." />
      <Task ml="ml-px" pl="pl-[11px]" gap="gap-[4px]" icon={<BigDoc label="SCH" color="#cf2020" />} label="1 Schematic - C:\..." />
      <div className="flex-1" />
      <Tray><circle cx="8" cy="8" r="8" fill="#ff7800" /><path d="M2 11c3-3 6-5 7-8l4 6v3H9l-1-2-3 2z" fill="#fff" /><path d="M4 9l7 3" stroke="#ff7800" /></Tray>
      <Tray><path d="M1 1.500l2.500 4L8 9l-1 1H4l1.500 1.500 2 .5.5 3 1.500-2.500 3.500 1.500-1.500-3.500L15 10l-3.500-2.500L14 5V3.500L12 4 9.500 6 5 4z" fill="#e4e4e4" /><path d="M4 5l7 5.500" stroke="#888" /></Tray>
      <Tray><path d="M3 0h6v4H3z" fill="#ddd" /><path d="M2 4h8v9l-3 2H4l-2-2z" fill="#777" /><circle cx="11" cy="11" r="5" fill="#20a020" /><path d="M8.500 11l2 2 3-4" stroke="#fff" strokeWidth="1.500" /></Tray>
      <Tray><rect width="16" height="16" fill="#1c1f1c" /><path d="M2.500 8Q5 4.500 8 5t5 3Q10 11 8 11T2.500 8zM5 8q1.500-2 3-1.500T10 8t-3 1" stroke="#76b83a" /><path d="M8 4h6v8H8l4-4z" fill="#76b83a" /></Tray>
      <Tray><rect width="16" height="16" rx="1.500" fill="#e8731c" /><rect x=".5" y=".5" width="15" height="15" rx="1" stroke="#f7a868" /><path d="M8.500 2q-3 3 0 4.500-.5 1 0 1.500M10 4.500Q8 6 9 7M4.500 9.500h6q2-1 1 1l-1.500 1M5 11.500h4.500M3.500 13.500h9" stroke="#fff" strokeWidth="1.100" /></Tray>
      <Tray><circle cx="8" cy="8" r="8" fill="#14365c" /><path d="M1 11q7 9 14-1z" fill="#1a8cc0" /><circle cx="11" cy="5.500" r="3" stroke="#fff" strokeWidth="1.500" /><path d="M0 8l5 2 4-3M5 10.500l3.500-1" stroke="#fff" strokeWidth="2.500" /></Tray>
      <Tray><circle cx="8" cy="8" r="7.500" fill="#f6c15a" /><path d="M.8 9Q4 4 8 8t7.500 1a7.500 7.500 0 0 1-14.700 0z" fill="#7d94c4" /></Tray>
      <Tray><path d="M2.500 0v16" stroke="#fff" strokeWidth="1.500" /><path d="M4 2h6v2h5l-1.500 3L15 10H9V8H4z" fill="#fff" /></Tray>
      <Tray><path d="M4 3.500h11v8H5M8 15h6M11 12v3M1 1h4v4H1zM3 5v9h3" stroke="#fff" strokeWidth="1.200" /></Tray>
      <Tray><path d="M1 5h2.500L8 1v14l-4.500-4H1z" fill="#fff" /><path d="M10 5q2 3 0 6M12 3.500q3 4.500 0 9" stroke="#fff" /></Tray>
      <span className="ml-[9px] w-[24px] tracking-[-0.300px]">ENG</span>
      <div className="ml-[10px] mr-[11px] w-[62px] whitespace-nowrap text-center leading-[17px] tracking-[-0.300px]">21:04<br />12-12-2023</div>
    </div>
  );
}

export default function App() {
  return (
    <div className={`relative flex h-[1080px] w-[1920px] flex-col overflow-hidden bg-[#eee] ${UI}`}>
      <div className="flex h-[23px] shrink-0 items-center border-b border-[#d6d6d6] bg-[#ebebeb]">
        <div className="ml-[3px] w-[150px]"><Doc label="BRD" color="#178f45" /></div>
        <div className={`${SEGOE} flex-1 pr-[55px] text-center text-[15px] leading-[22px] tracking-[-0.370px] text-[#222]`}>2 Board - C:\Users\samuel\Documents\EAGLE\projects\EAGLE to GCODE\untitled.brd - EAGLE 9.6.2 free [OFFLINE]</div>
        <div className="flex w-[51px] items-start self-start">
          <svg width="51" height="23" viewBox="0 0 51 23" shapeRendering="crispEdges" fill="none" stroke="#222"><path d="M7 12h8" strokeWidth="2" /><path d="M32.500 6.500h7v6h-7zM32 7.500h8M34.500 4.500h8v7" /></svg>
        </div>
        <div className="mr-[3px] flex h-[19px] w-[45px] items-center justify-center self-start bg-[#bcbcbc]"><svg width="9" height="8" viewBox="0 0 9 8"><path d="M1 .5l7 7M8 .5l-7 7" stroke="#fff" strokeWidth="1.800" /></svg></div>
      </div>
      <div className={`${SEGOE} flex h-[36px] shrink-0 items-center gap-[10px] border-b border-[#b8b8b8] bg-[#ccc] pl-[4px] text-[13px] tracking-[-0.120px] text-[#333]`}>
        {["File", "Edit", "Draw", "View", "Tools", "Library", "Options", "Window", "Help"].map((m) => <span key={m}>{m}</span>)}
      </div>
      <MainToolbar />
      <LayerBar />
      <div className="flex h-[876px] shrink-0 border-b border-[#7d7d7d]">
        <Palette />
        <div className="flex flex-1 flex-col">
          <div className="flex h-[34px] shrink-0 items-center pr-1">
            <span className="w-[146px] pl-[7px] pt-[2px] text-[12px] tracking-[0.150px]">50 mil (-3 18)</span>
            <div className="flex h-[26px] flex-1 items-center justify-between border border-[#979797] bg-[#d3d3d3] pl-[6px] pr-[5px] text-[#8a8a8a]">
              <span className="pt-[2px] tracking-[-0.040px]">Click or press Ctrl+L key to activate command line mode</span><Caret />
            </div>
          </div>
          <div className="flex flex-1">
            <div className="flex w-[1834px] flex-col">
              <BoardCanvas />
              <div className={`flex h-4 items-center pl-[180px] ${DITHER}`}><div className="flex h-4 w-[619px] items-center bg-[#eee]"><div className="h-[6px] w-full rounded-[2px] bg-[#808080]" /></div></div>
            </div>
            <div className="flex flex-1 flex-col">
              <div className={`h-[632px] ${DITHER}`} />
              <div className="flex h-[192px] justify-center bg-[#eee]"><div className="w-[6px] rounded-[2px] bg-[#808080]" /></div>
            </div>
          </div>
        </div>
      </div>
      <div className="flex h-[25px] shrink-0 items-center justify-end pr-[25px]">
        <div className="flex h-[21px] w-[27px] items-center justify-center border-x border-[#d2d2d2]"><svg width="20" height="20" viewBox="0 0 20 20"><path d="M14 0L0 10.500h7.500L5 20 20 8.500h-8z" fill="#17b350" /></svg></div>
      </div>
      <Taskbar />
      <div className="absolute left-[1874px] top-[182px] flex flex-col gap-[15px]">
        <SideTab pt="gap-[6px] pt-2" cls="mr-px font-['DejaVu_Sans',sans-serif] text-[10.500px] font-bold leading-[14px] tracking-[-0.100px] [font-stretch:normal]" label="MANUFACTURING"
          icon={<svg width="17" height="17" viewBox="0 0 17 17" className="shrink-0"><rect width="17" height="17" rx="2" fill="#1a8c46" /><path d="M5.500 2v13M8.500 2v13M11.500 2v13" stroke="#f0d030" strokeWidth="1.500" /><rect x="4.500" y="5" width="8" height="7" fill="#1a8c46" stroke="#e8e8e8" /></svg>} />
        <SideTab pt="gap-[9px] pt-[19px]" cls={`${SEGOE} mr-[2px] text-[11.500px] font-bold leading-[14px]`} label="FUSION 360" icon={<FusionIcon />} />
        <SideTab pt="gap-[9px] pt-[19px]" cls={`${SEGOE} mr-[2px] text-[11.500px] font-bold leading-[14px] tracking-[-0.200px]`} label="FUSION TEAM" icon={<FusionIcon />} />
      </div>
      <CamDialog />
    </div>
  );
}
